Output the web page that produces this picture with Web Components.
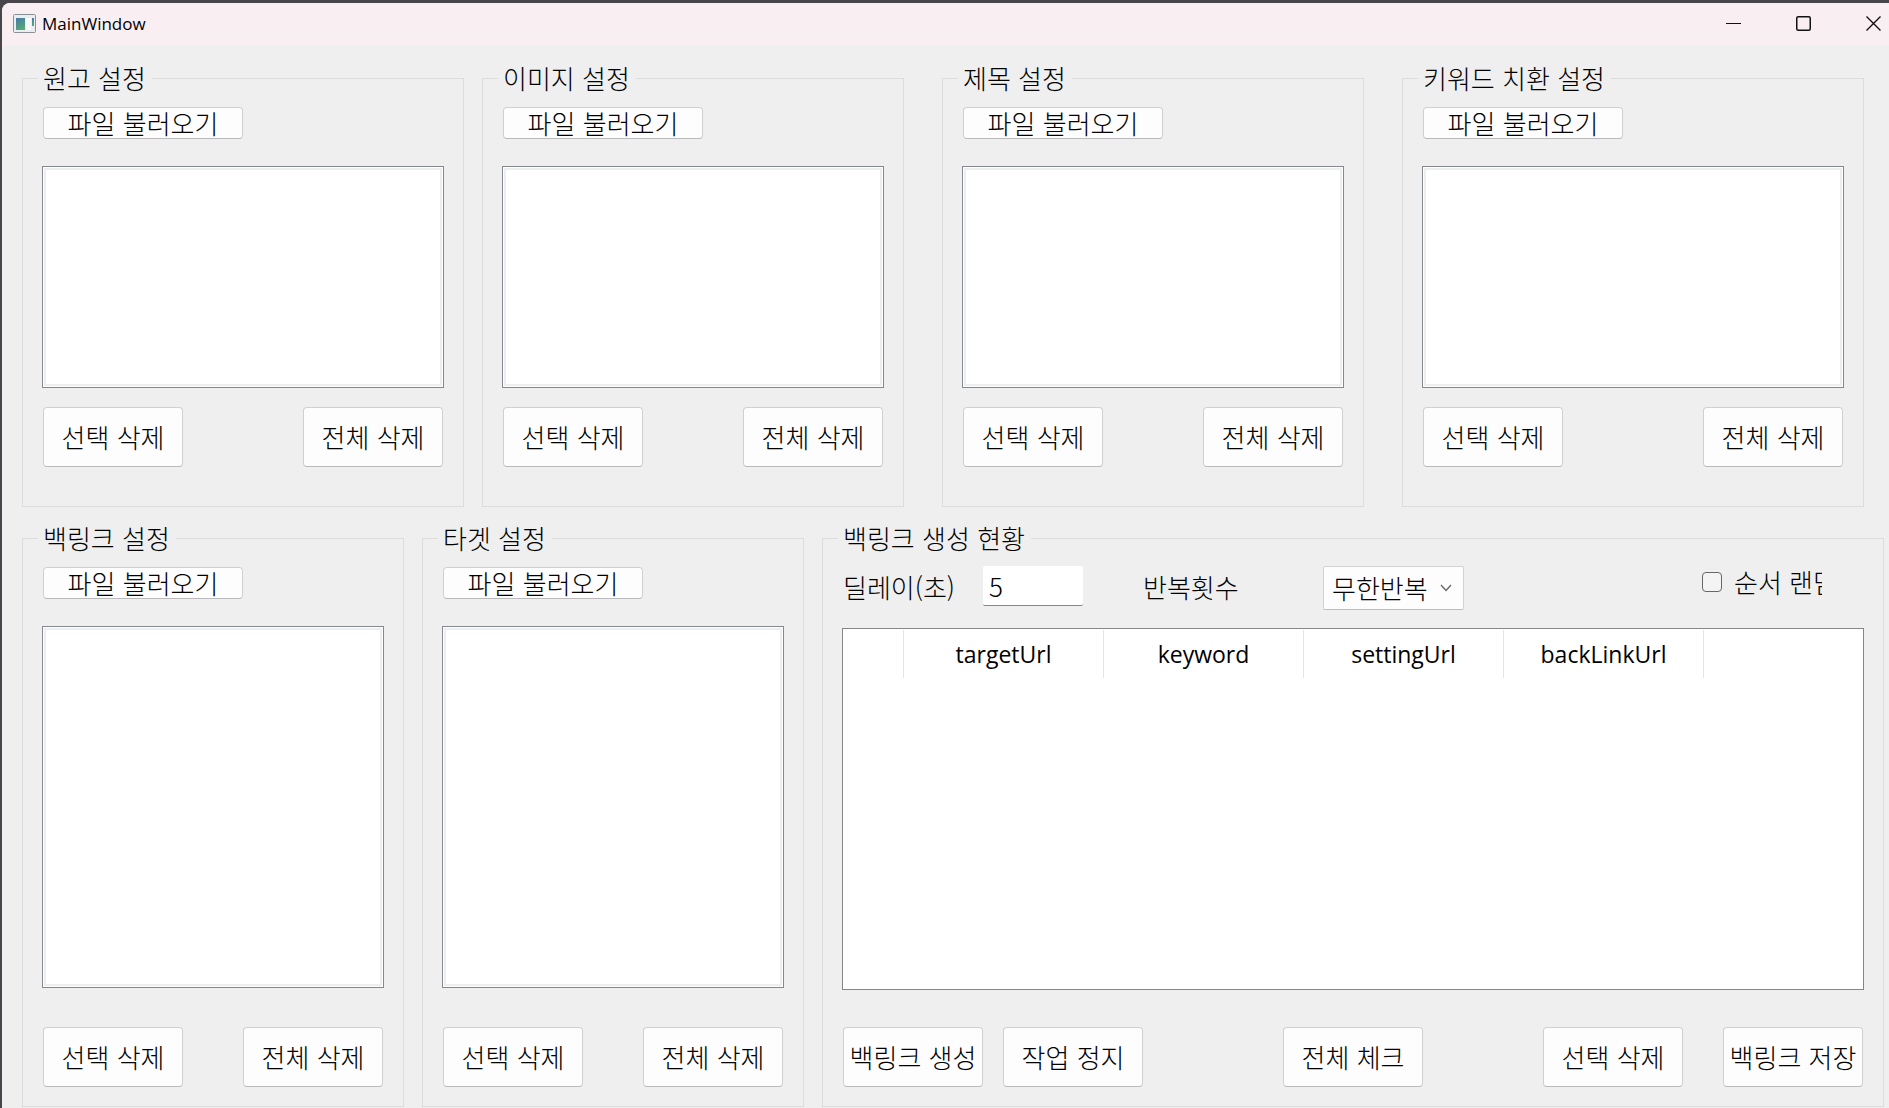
<!DOCTYPE html>
<html lang="ko">
<head>
<meta charset="utf-8">
<title>MainWindow</title>
<style>
  html, body { height: 100%; }
  body {
    margin: 0;
    background: #48464a;
    color: #000;
    font: 300 26px/36px "Noto Sans CJK KR", sans-serif;
  }
</style>
</head>
<body>
<main-window></main-window>

<script>
const define = (name, html, onLabel) => {
  const template = document.createElement('template');
  template.innerHTML = html;
  customElements.define(name, class extends HTMLElement {
    static observedAttributes = ['label'];
    constructor() {
      super();
      this.attachShadow({ mode: 'open' }).append(template.content.cloneNode(true));
    }
    attributeChangedCallback(attribute, before, label) {
      if (onLabel) onLabel(this.shadowRoot, label);
    }
  });
};

define('push-button', `
  <style>
    :host { display: block; flex: none; width: 140px; height: 60px; }
    :host([wide]) { width: 200px; height: 32px; }
    button {
      box-sizing: border-box; width: 100%; height: 100%; padding: 0;
      display: flex; align-items: center; justify-content: center;
      font: inherit; line-height: 30px; color: inherit; white-space: nowrap;
      background: #fdfdfd; border: 1px solid #d0d0d0; border-bottom-color: #b9b9b9; border-radius: 4px;
    }
  </style>
  <button type="button"><slot></slot></button>`);

define('group-box', `
  <style>
    :host { display: flex; min-width: 0; }
    fieldset {
      flex: 1; min-width: 0; box-sizing: border-box; margin: 0;
      display: flex; flex-direction: column;
      border: 1px solid #dcdcdc; padding: var(--group-padding, 11px 19px 19px);
    }
    legend { margin-left: -4px; padding: 0 6px 0 5px; line-height: 36px; }
  </style>
  <fieldset><legend></legend><slot></slot></fieldset>`,
  (root, label) => { root.querySelector('legend').textContent = label; });

define('list-box', `
  <style>
    :host { display: flex; min-height: 0; }
    select {
      flex: 1; min-width: 0; box-sizing: border-box; height: 100%; margin: 0; padding: 3px;
      appearance: none; border: 1px solid #86888f; border-radius: 0; background: #fff; outline: 0;
      box-shadow: inset 0 0 0 1px #fff, inset 0 0 0 3px #eceef0; font: inherit; overflow: hidden;
    }
  </style>
  <select multiple></select>`,
  (root, label) => { root.querySelector('select').setAttribute('aria-label', label); });

define('file-group', `
  <style>
    :host { display: flex; min-width: 0; --group-padding: 11px 19px 39px; }
    :host([tall]) { --group-padding: 11px 19px 19px; }
    group-box { flex: 1; }
    push-button[wide] { margin-left: 1px; }
    list-box { height: 222px; margin: 27px 0 19px; }
    :host([tall]) list-box { flex: 1; height: auto; margin-bottom: 39px; }
    .actions { display: flex; justify-content: space-between; padding: 0 1px; }
  </style>
  <group-box>
    <push-button wide>파일 불러오기</push-button>
    <list-box></list-box>
    <div class="actions"><push-button>선택 삭제</push-button><push-button>전체 삭제</push-button></div>
  </group-box>`,
  (root, label) => {
    root.querySelector('group-box').setAttribute('label', label);
    root.querySelector('list-box').setAttribute('label', label);
  });

define('run-options', `
  <style>
    :host { display: flex; align-items: flex-start; height: 44px; padding-left: 1px; white-space: nowrap; }
    .caption { flex: none; width: 140px; line-height: 42px; }
    .caption.repeat { width: 180px; margin-left: 60px; }
    #delay {
      box-sizing: border-box; width: 100px; height: 40px; padding: 0 6px; margin: 0;
      border: 0; border-bottom: 1px solid #868686; border-radius: 2px; background: #fff;
      font: inherit; color: inherit; outline: 0;
    }
    .combo { display: grid; width: 141px; height: 44px; }
    .combo > * { grid-area: 1 / 1; }
    select {
      box-sizing: border-box; width: 100%; height: 100%; margin: 0; padding: 0 0 0 8px; appearance: none;
      border: 1px solid #d2d2d2; border-bottom-color: #bcbcbc; border-radius: 2px; background: #fdfdfd;
      font: inherit; color: inherit;
    }
    .combo svg { align-self: center; justify-self: end; margin-right: 12px; pointer-events: none; }
    .random { display: flex; align-items: center; width: 120px; height: 32px; margin: 0 42px 0 auto; overflow: hidden; }
    .random input {
      flex: none; box-sizing: border-box; width: 20px; height: 20px; margin: 0 12px 0 0; appearance: none;
      border: 1px solid #666; border-radius: 4px; background: #f4f4f4;
    }
  </style>
  <label class="caption" for="delay">딜레이(초)</label>
  <input id="delay" type="text" value="5">
  <label class="caption repeat" for="repeat">반복횟수</label>
  <span class="combo">
    <select id="repeat"><option>무한반복</option></select>
    <svg width="12" height="8" viewBox="0 0 12 8" fill="none" stroke="#666" stroke-width="1.3"><path d="M1 1l5 5.5L11 1"/></svg>
  </span>
  <label class="random"><input type="checkbox">순서 랜덤</label>`);

define('result-table', `
  <style>
    :host { display: block; flex: 1; box-sizing: border-box; border: 1px solid #84868a; background: #fff; padding-top: 1px; }
    table { border-collapse: separate; border-spacing: 0; table-layout: fixed; width: 100%; }
    th {
      box-sizing: border-box; height: 48px; padding: 0; border-right: 1px solid #e5e5e5;
      font: 400 23px/32px "Open Sans", sans-serif; width: 200px;
    }
    th:first-child { width: 61px; }
    th:last-child { width: auto; border: 0; }
  </style>
  <table><thead><tr><th></th><th>targetUrl</th><th>keyword</th><th>settingUrl</th><th>backLinkUrl</th><th></th></tr></thead></table>`);

define('status-group', `
  <style>
    :host { display: flex; min-width: 0; --group-padding: 10px 19px 19px; }
    group-box { flex: 1; }
    result-table { margin: 18px 0 37px; }
    .actions { display: flex; justify-content: space-between; padding: 0 1px; }
    .pair { display: flex; gap: 20px; }
    .pair.end { gap: 40px; }
    .middle { margin-left: 20px; }
  </style>
  <group-box label="백링크 생성 현황">
    <run-options></run-options>
    <result-table></result-table>
    <div class="actions">
      <div class="pair"><push-button>백링크 생성</push-button><push-button>작업 정지</push-button></div>
      <push-button class="middle">전체 체크</push-button>
      <div class="pair end"><push-button>선택 삭제</push-button><push-button>백링크 저장</push-button></div>
    </div>
  </group-box>`);

define('title-bar', `
  <style>
    :host { display: flex; align-items: center; height: 43px; box-sizing: border-box; padding: 0 8px 2px 11px; background: #f9eff2; }
    h1 { margin: 0 auto 0 6px; font: 400 17px/24px "Open Sans", sans-serif; }
    .controls { display: flex; gap: 55px; }
    button { display: flex; margin: 0; padding: 0; border: 0; background: none; }
    svg { display: block; }
  </style>
  <svg width="23" height="19" viewBox="0 0 23 19">
    <defs><linearGradient id="pane" x1="0" y1="0" x2="0.4" y2="1"><stop offset="0" stop-color="#4678a8"/><stop offset="1" stop-color="#55a777"/></linearGradient></defs>
    <rect x="0.5" y="0.5" width="22" height="18" rx="1" fill="#e9eef0" stroke="#8a9096"/>
    <rect x="3" y="4" width="9" height="12" fill="url(#pane)"/>
    <rect x="13" y="4" width="5" height="12" fill="#fafafa"/>
    <rect x="19" y="4" width="2" height="8" fill="url(#pane)"/>
  </svg>
  <h1>MainWindow</h1>
  <div class="controls">
    <button type="button" aria-label="최소화"><svg width="15" height="15"><path d="M0 7.5h15" stroke="#111"/></svg></button>
    <button type="button" aria-label="최대화"><svg width="15" height="15"><rect x="0.75" y="0.75" width="13.5" height="13.5" rx="1.5" fill="none" stroke="#111" stroke-width="1.5"/></svg></button>
    <button type="button" aria-label="닫기"><svg width="15" height="15"><path d="M0.5 0.5l14 14M14.5 0.5l-14 14" stroke="#111" stroke-width="1.4"/></svg></button>
  </div>`);

define('main-window', `
  <style>
    :host { display: flex; box-sizing: border-box; min-height: 100%; padding: 3px 0 0 2px; }
    .frame { flex: 1; min-width: 0; display: flex; flex-direction: column; background: #efefef; border-top-left-radius: 8px; overflow: hidden; }
    main { flex: 1; display: flex; flex-direction: column; gap: 13px; padding: 14px 5px 1px 20px; }
    .row { display: grid; }
    .sources { grid-template-columns: 422fr 422fr 422fr 462fr; column-gap: 38px; margin-right: 20px; }
    .sources :first-child { margin-right: -20px; }
    .links { flex: 1; grid-template-columns: 382fr 382fr 1062fr; column-gap: 18px; }
  </style>
  <div class="frame">
    <title-bar></title-bar>
    <main>
      <div class="row sources">
        <file-group label="원고 설정"></file-group>
        <file-group label="이미지 설정"></file-group>
        <file-group label="제목 설정"></file-group>
        <file-group label="키워드 치환 설정"></file-group>
      </div>
      <div class="row links">
        <file-group tall label="백링크 설정"></file-group>
        <file-group tall label="타겟 설정"></file-group>
        <status-group></status-group>
      </div>
    </main>
  </div>`);
</script>
</body>
</html>
